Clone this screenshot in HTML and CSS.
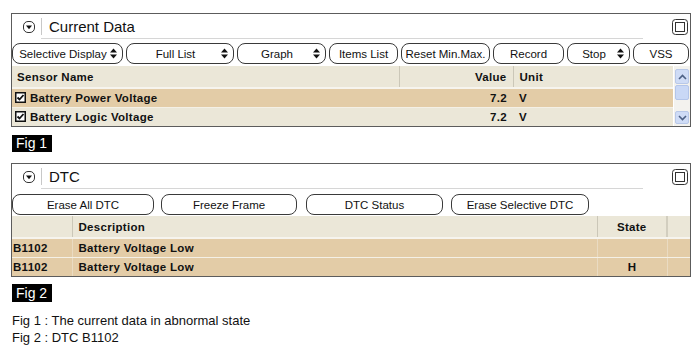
FILE: index.html
```html
<!DOCTYPE html>
<html>
<head>
<meta charset="utf-8">
<link rel="stylesheet" href="styles.css">
</head>
<body>
<div class="page">
  <section class="panel">
    <div class="panel-head">
      <svg class="collapse" width="12" height="12" viewBox="0 0 12 12"><rect x="0.5" y="0.5" width="11" height="11" rx="4.5" fill="#fff" stroke="#333"/><polygon points="3,4.5 9,4.5 6,8.2" fill="#111"/></svg>
      <div class="head-main">
        <span class="sep"></span>
        <span class="title">Current Data</span>
      </div>
      <svg class="winbtn" width="16" height="16" viewBox="0 0 16 16"><rect x="0.5" y="0.5" width="15" height="15" rx="3" fill="#fff" stroke="#333"/><rect x="3.5" y="3.5" width="9" height="9" fill="none" stroke="#333"/></svg>
    </div>
    <div class="btnrow btnrow-cd">
      <div class="btn sel"><span class="btxt">Selective Display</span><svg class="updn" width="7" height="11" viewBox="0 0 7 11"><polygon points="0,4.6 3.5,0.4 7,4.6" fill="#111"/><polygon points="0,6.4 7,6.4 3.5,10.6" fill="#111"/></svg></div>
      <div class="btn sel"><span class="btxt">Full List</span><svg class="updn" width="7" height="11" viewBox="0 0 7 11"><polygon points="0,4.6 3.5,0.4 7,4.6" fill="#111"/><polygon points="0,6.4 7,6.4 3.5,10.6" fill="#111"/></svg></div>
      <div class="btn sel"><span class="btxt">Graph</span><svg class="updn" width="7" height="11" viewBox="0 0 7 11"><polygon points="0,4.6 3.5,0.4 7,4.6" fill="#111"/><polygon points="0,6.4 7,6.4 3.5,10.6" fill="#111"/></svg></div>
      <div class="btn">Items List</div>
      <div class="btn">Reset Min.Max.</div>
      <div class="btn">Record</div>
      <div class="btn sel"><span class="btxt">Stop</span><svg class="updn" width="7" height="11" viewBox="0 0 7 11"><polygon points="0,4.6 3.5,0.4 7,4.6" fill="#111"/><polygon points="0,6.4 7,6.4 3.5,10.6" fill="#111"/></svg></div>
      <div class="btn">VSS</div>
    </div>
    <div class="tablewrap">
      <table class="grid grid-cd">
        <colgroup><col class="c-name"><col class="c-val"><col></colgroup>
        <thead><tr><th class="left">Sensor Name</th><th class="right">Value</th><th class="left">Unit</th></tr></thead>
        <tbody>
          <tr class="hl"><td class="left"><span class="chk"><svg width="11" height="11" viewBox="0 0 11 11"><rect x="0.75" y="0.75" width="9.5" height="9.5" fill="#fff" stroke="#111" stroke-width="1.5"/><polyline points="2.5,5.5 4.5,7.5 8.5,3" fill="none" stroke="#111" stroke-width="1.8"/></svg></span>Battery Power Voltage</td><td class="right">7.2</td><td class="left">V</td></tr>
          <tr class="plain"><td class="left"><span class="chk"><svg width="11" height="11" viewBox="0 0 11 11"><rect x="0.75" y="0.75" width="9.5" height="9.5" fill="#fff" stroke="#111" stroke-width="1.5"/><polyline points="2.5,5.5 4.5,7.5 8.5,3" fill="none" stroke="#111" stroke-width="1.8"/></svg></span>Battery Logic Voltage</td><td class="right">7.2</td><td class="left">V</td></tr>
        </tbody>
      </table>
      <div class="scrollbar">
        <div class="sb-btn sb-up"><svg width="9" height="6" viewBox="0 0 9 6"><polyline points="1,5 4.5,1.5 8,5" fill="none" stroke="#4d6185" stroke-width="1.6"/></svg></div>
        <div class="sb-thumb"></div>
        <div class="sb-track"></div>
        <div class="sb-btn sb-down"><svg width="9" height="6" viewBox="0 0 9 6"><polyline points="1,1 4.5,4.5 8,1" fill="none" stroke="#4d6185" stroke-width="1.6"/></svg></div>
      </div>
    </div>
  </section>
  <div class="fig fig1">Fig 1</div>

  <section class="panel panel-dtc">
    <div class="panel-head">
      <svg class="collapse" width="12" height="12" viewBox="0 0 12 12"><rect x="0.5" y="0.5" width="11" height="11" rx="4.5" fill="#fff" stroke="#333"/><polygon points="3,4.5 9,4.5 6,8.2" fill="#111"/></svg>
      <div class="head-main">
        <span class="sep"></span>
        <span class="title">DTC</span>
      </div>
      <svg class="winbtn" width="16" height="16" viewBox="0 0 16 16"><rect x="0.5" y="0.5" width="15" height="15" rx="3" fill="#fff" stroke="#333"/><rect x="3.5" y="3.5" width="9" height="9" fill="none" stroke="#333"/></svg>
    </div>
    <div class="btnrow btnrow-dtc">
      <div class="btn">Erase All DTC</div>
      <div class="btn">Freeze Frame</div>
      <div class="btn">DTC Status</div>
      <div class="btn">Erase Selective DTC</div>
    </div>
    <table class="grid grid-dtc">
      <colgroup><col class="c-code"><col><col class="c-state"><col class="c-extra"></colgroup>
      <thead><tr><th class="left"></th><th class="left">Description</th><th class="center">State</th><th></th></tr></thead>
      <tbody>
        <tr class="hl"><td class="left code">B1102</td><td class="left">Battery Voltage Low</td><td class="center"></td><td></td></tr>
        <tr class="hl"><td class="left code">B1102</td><td class="left">Battery Voltage Low</td><td class="center">H</td><td></td></tr>
      </tbody>
    </table>
  </section>
  <div class="fig fig2">Fig 2</div>

  <div class="notes">
    <p>Fig 1 : The current data in abnormal state</p>
    <p>Fig 2 : DTC B1102</p>
  </div>
</div>
</body>
</html>
```

FILE: styles.css
```css
* { box-sizing: border-box; }
html, body { margin: 0; padding: 0; background: #fff; }
body { font-family: "Liberation Sans", Arial, sans-serif; color: #111; }

.page { padding: 13px 0 0 11px; width: 700px; }

.panel {
  width: 680px;
  border: 1px solid #5c5c5c;
  background: #fff;
}

.panel-head {
  height: 26px;
  display: flex;
  align-items: center;
}
.collapse { margin-left: 11px; flex: none; }
.head-main {
  margin-left: 6px;
  width: 602px;
  height: 25px;
  align-self: flex-start;
  border-bottom: 1px solid #d6d6d6;
  display: flex;
  align-items: center;
}
.sep { width: 1px; height: 17px; background: #c8c8c8; flex: none; }
.title { margin-left: 7px; font-size: 15px; color: #111; }
.winbtn { margin-left: auto; margin-right: 2px; flex: none; }

.btnrow {
  display: grid;
  padding-top: 3px;
}
.btnrow-cd {
  grid-template-columns: 111px 108px 89px 69px 89px 71px 63px 56px;
  column-gap: 3px;
}
.btnrow-dtc {
  grid-template-columns: 142px 137px 140px 140px;
  column-gap: 6px;
  padding-top: 4px;
}
.btnrow-dtc .btn:nth-child(2) { margin-left: 1px; }
.btnrow-dtc .btn:nth-child(3) { margin-left: 3px; }
.btnrow-dtc .btn:nth-child(4) { margin-left: 2px; }

.btn {
  height: 21px;
  border: 1px solid #3a3a3a;
  border-radius: 8px;
  background: #fff;
  font-size: 11.5px;
  color: #111;
  display: flex;
  align-items: center;
  justify-content: center;
  white-space: nowrap;
}
.btn.sel {
  justify-content: flex-start;
  padding: 0 5px 0 4px;
}
.btn.sel .btxt { flex: 1; text-align: center; }
.btn.sel .updn { flex: none; margin-left: 1px; }

.tablewrap {
  display: flex;
  margin-top: 2px;
}

.grid {
  border-collapse: collapse;
  table-layout: fixed;
  font-size: 11.5px;
  font-weight: bold;
  letter-spacing: 0.3px;
  color: #111;
}
.grid-cd { width: 661px; }
.grid-dtc { width: 678px; margin-top: 1px; }
.c-name { width: 387px; }
.c-val { width: 114px; }
.c-code { width: 60px; }
.c-state { width: 70px; }
.c-extra { width: 23px; }

.grid th {
  height: 22px;
  background: #ebe7d8;
  border-right: 1px solid #cbc7b8;
  border-bottom: 2px solid #f6f4ee;
  padding: 0 5px;
  font-weight: bold;
}
.grid th:last-child { border-right: none; }
.grid-dtc th:nth-child(3) { border-right: 2px solid #d2cebf; }
.grid td {
  height: 19px;
  padding: 0 5px;
  border-bottom: 1px solid #f4f0e6;
  white-space: nowrap;
}
.grid-dtc td:nth-child(1) { border-right: 1px solid #eadbc2; padding-left: 1px; }
.grid-dtc td:nth-child(3) { border-left: 1px solid #eadbc2; border-right: 1px solid #eadbc2; }
.grid tr:last-child td { border-bottom: none; }
.left { text-align: left; }
.right { text-align: right; }
.center { text-align: center; }

.grid-cd th:first-child { padding-left: 5px; }
.grid-cd td:first-child { padding-left: 3px; }
.grid-cd td:nth-child(2) { padding-right: 6px; }
.grid-cd td:nth-child(3), .grid-cd th:nth-child(3) { padding-left: 6px; }
.grid-cd th:nth-child(2) { padding-right: 6px; }
.grid-dtc th:nth-child(2), .grid-dtc td:nth-child(2) { padding-left: 6px; }

tr.hl td { background: #e3cca7; }
tr.plain td { background: #ebe7d8; }

.chk { display: inline-block; vertical-align: -1px; margin-right: 4px; }
.chk svg { display: block; }

.scrollbar {
  width: 17px;
  display: flex;
  flex-direction: column;
  background: #f3f2ee;
  border-left: 1px solid #fff;
}
.sb-btn {
  height: 15px;
  margin: 1px 1px 0 1px;
  border: 1px solid #b8c8e8;
  border-radius: 2px;
  background: #cfdcf6;
  display: flex;
  align-items: center;
  justify-content: center;
}
.sb-up { margin-top: 3px; }
.sb-thumb {
  height: 15px;
  margin: 1px 1px 0 1px;
  border: 1px solid #b3c5ea;
  border-radius: 2px;
  background: #c9d8f6;
}
.sb-track { flex: 1; }
.sb-down { height: 13px; margin-bottom: 2px; }

.fig {
  display: inline-block;
  background: #000;
  color: #fff;
  font-size: 14px;
  height: 17px;
  line-height: 17px;
  padding: 0 5px 0 4px;
  margin-left: 1px;
}
.fig1 { margin-top: 8px; }
.fig2 { margin-top: 7px; height: 18px; line-height: 18px; }
.panel-dtc { margin-top: 11px; }

.notes { margin-top: 10px; margin-left: 1px; font-size: 13px; line-height: 17px; color: #111; }
.notes p { margin: 0; }
```
